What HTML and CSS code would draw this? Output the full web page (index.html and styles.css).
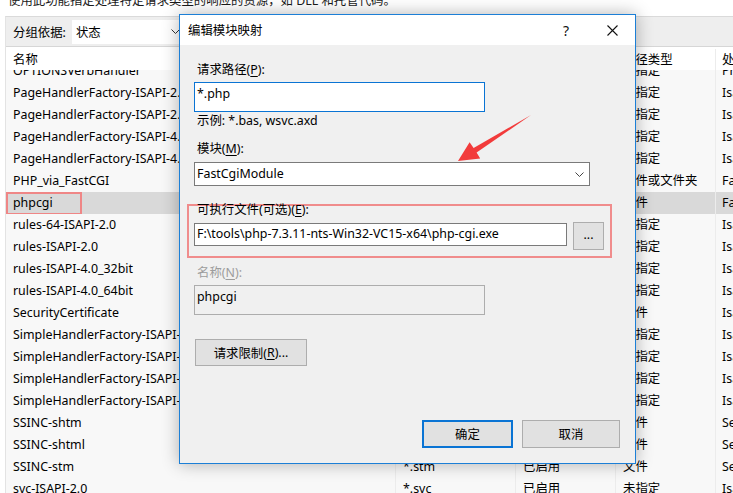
FILE: index.html
```html
<!DOCTYPE html>
<html lang="zh-CN">
<head>
<meta charset="utf-8">
<title>编辑模块映射</title>
<link rel="stylesheet" href="styles.css">
</head>
<body>
<div class="intro">使用此功能指定处理特定请求类型的响应的资源，如 DLL 和托管代码。</div>
<div class="panel">
  <div class="groupbar">
    <span class="group-label">分组依据:</span>
    <div class="group-select"><span>状态</span><svg class="chev" width="9" height="5" viewBox="0 0 9 5"><polyline points="0.5,0.5 4.5,4.5 8.5,0.5" fill="none" stroke="#333" stroke-width="1"/></svg></div>
  </div>
  <div class="list">
    <div class="row head"><div class="c name">名称</div><div class="c path">路径</div><div class="c state">状态</div><div class="c ptype">路径类型</div><div class="c handler">处理程序</div></div>
    <div class="rows">
      <div class="rows-inner">
        <div class="row"><div class="c name">OPTIONSVerbHandler</div><div class="c path">*</div><div class="c state">已启用</div><div class="c ptype">未指定</div><div class="c handler">ProtocolSupportModule</div></div>
        <div class="row"><div class="c name">PageHandlerFactory-ISAPI-2.0</div><div class="c path">*.aspx</div><div class="c state">已启用</div><div class="c ptype">未指定</div><div class="c handler">IsapiModule</div></div>
        <div class="row"><div class="c name">PageHandlerFactory-ISAPI-2.0-64</div><div class="c path">*.aspx</div><div class="c state">已启用</div><div class="c ptype">未指定</div><div class="c handler">IsapiModule</div></div>
        <div class="row"><div class="c name">PageHandlerFactory-ISAPI-4.0_32bit</div><div class="c path">*.aspx</div><div class="c state">已启用</div><div class="c ptype">未指定</div><div class="c handler">IsapiModule</div></div>
        <div class="row"><div class="c name">PageHandlerFactory-ISAPI-4.0_64bit</div><div class="c path">*.aspx</div><div class="c state">已启用</div><div class="c ptype">未指定</div><div class="c handler">IsapiModule</div></div>
        <div class="row"><div class="c name">PHP_via_FastCGI</div><div class="c path">*.php</div><div class="c state">已启用</div><div class="c ptype">文件或文件夹</div><div class="c handler">FastCgiModule</div></div>
        <div class="row selected"><div class="c name">phpcgi<span class="mark"></span></div><div class="c path">*.php</div><div class="c state">已启用</div><div class="c ptype">文件</div><div class="c handler">FastCgiModule</div></div>
        <div class="row"><div class="c name">rules-64-ISAPI-2.0</div><div class="c path">*.rules</div><div class="c state">已启用</div><div class="c ptype">未指定</div><div class="c handler">IsapiModule</div></div>
        <div class="row"><div class="c name">rules-ISAPI-2.0</div><div class="c path">*.rules</div><div class="c state">已启用</div><div class="c ptype">未指定</div><div class="c handler">IsapiModule</div></div>
        <div class="row"><div class="c name">rules-ISAPI-4.0_32bit</div><div class="c path">*.rules</div><div class="c state">已启用</div><div class="c ptype">未指定</div><div class="c handler">IsapiModule</div></div>
        <div class="row"><div class="c name">rules-ISAPI-4.0_64bit</div><div class="c path">*.rules</div><div class="c state">已启用</div><div class="c ptype">未指定</div><div class="c handler">IsapiModule</div></div>
        <div class="row"><div class="c name">SecurityCertificate</div><div class="c path">*.cer</div><div class="c state">已启用</div><div class="c ptype">文件</div><div class="c handler">IsapiModule</div></div>
        <div class="row"><div class="c name">SimpleHandlerFactory-ISAPI-2.0</div><div class="c path">*.ashx</div><div class="c state">已启用</div><div class="c ptype">未指定</div><div class="c handler">IsapiModule</div></div>
        <div class="row"><div class="c name">SimpleHandlerFactory-ISAPI-2.0-64</div><div class="c path">*.ashx</div><div class="c state">已启用</div><div class="c ptype">未指定</div><div class="c handler">IsapiModule</div></div>
        <div class="row"><div class="c name">SimpleHandlerFactory-ISAPI-4.0_32bit</div><div class="c path">*.ashx</div><div class="c state">已启用</div><div class="c ptype">未指定</div><div class="c handler">IsapiModule</div></div>
        <div class="row"><div class="c name">SimpleHandlerFactory-ISAPI-4.0_64bit</div><div class="c path">*.ashx</div><div class="c state">已启用</div><div class="c ptype">未指定</div><div class="c handler">IsapiModule</div></div>
        <div class="row"><div class="c name">SSINC-shtm</div><div class="c path">*.shtm</div><div class="c state">已启用</div><div class="c ptype">文件</div><div class="c handler">ServerSideIncludeModule</div></div>
        <div class="row"><div class="c name">SSINC-shtml</div><div class="c path">*.shtml</div><div class="c state">已启用</div><div class="c ptype">文件</div><div class="c handler">ServerSideIncludeModule</div></div>
        <div class="row"><div class="c name">SSINC-stm</div><div class="c path">*.stm</div><div class="c state">已启用</div><div class="c ptype">文件</div><div class="c handler">ServerSideIncludeModule</div></div>
        <div class="row"><div class="c name">svc-ISAPI-2.0</div><div class="c path">*.svc</div><div class="c state">已启用</div><div class="c ptype">未指定</div><div class="c handler">IsapiModule</div></div>
      </div>
    </div>
  </div>
</div>

<div class="dialog">
  <div class="titlebar">
    <span class="title">编辑模块映射</span>
    <span class="tb-btn help">?</span>
    <span class="tb-btn close"><svg width="11" height="11" viewBox="0 0 11 11"><path d="M0.5 0.5 L10.5 10.5 M10.5 0.5 L0.5 10.5" stroke="#111" stroke-width="1.1" fill="none"/></svg></span>
  </div>
  <div class="dbody">
    <div class="label l1">请求路径(<u>P</u>):</div>
    <div class="field focus">*.php</div>
    <div class="hint">示例: *.bas, wsvc.axd</div>
    <div class="label l2">模块(<u>M</u>):</div>
    <div class="select"><span>FastCgiModule</span><svg width="9" height="5" viewBox="0 0 9 5"><polyline points="0.5,0.5 4.5,4.5 8.5,0.5" fill="none" stroke="#444" stroke-width="1"/></svg></div>
    <div class="redbox">
      <div class="label l3">可执行文件(可选)(<u>E</u>):</div>
      <div class="exe-row">
        <div class="field exe">F:\tools\php-7.3.11-nts-Win32-VC15-x64\php-cgi.exe</div>
        <div class="btn browse">...</div>
      </div>
    </div>
    <div class="label l4 disabled">名称(<u>N</u>):</div>
    <div class="field name-field">phpcgi</div>
    <div class="btn restrict">请求限制(<u>R</u>)...</div>
    <div class="actions">
      <div class="btn ok">确定</div>
      <div class="btn cancel">取消</div>
    </div>
  </div>
</div>

<svg class="arrow" width="90" height="60" viewBox="0 0 90 60">
  <polygon points="8,51 19.6,32.2 23.6,37.9 81,5 26.6,42.6 30.2,48.4" fill="#f23b3b"/>
</svg>
</body>
</html>
```

FILE: styles.css
```css
* { box-sizing: border-box; }

body {
  margin: 0;
  width: 733px;
  height: 493px;
  overflow: hidden;
  position: relative;
  background: #fff;
  color: #000;
  font-family: "Noto Sans", "Noto Sans CJK SC", sans-serif;
  font-size: 12.4px;
}

.intro {
  margin-top: -6px;
  height: 14px;
  line-height: 14px;
  padding-left: 8px;
  white-space: nowrap;
  color: #1a1a1a;
}

.panel {
  margin: 8px 0 0 5px;
  height: 477px;
  border-top: 1px solid #dadada;
  border-left: 1px solid #e3e3e3;
  display: flex;
  flex-direction: column;
}

.groupbar {
  height: 30px;
  flex: none;
  display: flex;
  align-items: center;
  background: #eeeeee;
  border-bottom: 1px solid #d6d6d6;
}

.group-label { padding-left: 7px; }

.group-select {
  margin-left: 6px;
  width: 116px;
  height: 24px;
  background: #fff;
  display: flex;
  align-items: center;
  justify-content: space-between;
  padding: 0 8px 0 4px;
}

.list {
  flex: 1;
  display: flex;
  flex-direction: column;
  min-height: 0;
  background: #f8f8f8;
}

.row {
  display: flex;
  height: 22px;
  line-height: 22px;
  white-space: nowrap;
  position: relative;
}

.row.head {
  height: 23px;
  padding-top: 2px;
  line-height: 21px;
  background: #fff;
  flex: none;
}

.c {
  padding-left: 7px;
  overflow: hidden;
  border-right: 1px solid #ececec;
  position: relative;
}

.name { width: 390px; flex: none; }
.path { width: 120px; flex: none; }
.state { width: 100px; flex: none; }
.ptype { width: 100px; flex: none; }
.handler { flex: 1; border-right: none; padding-left: 6px; }

.rows {
  flex: 1;
  overflow: hidden;
}

.rows-inner { margin-top: -10px; }

.row.selected { background: #d9d9d9; }

.mark {
  position: absolute;
  left: 0;
  top: 0;
  width: 76px;
  height: 23px;
  border: 2px solid #ef8686;
}

/* dialog */
.dialog {
  position: absolute;
  left: 179px;
  top: 14px;
  width: 457px;
  height: 450px;
  border: 1px solid #1c7fd6;
  background: #f0f0f0;
  box-shadow: 0 0 16px rgba(0, 0, 0, 0.3);
}

.titlebar {
  height: 30px;
  background: #fff;
  display: flex;
  align-items: center;
  padding-left: 8px;
}

.title { flex: 1; }

.tb-btn {
  width: 46px;
  height: 30px;
  display: flex;
  align-items: center;
  justify-content: center;
  font-size: 14px;
  color: #111;
}

.dbody { padding-left: 14px; }

.label {
  padding-left: 3px;
  line-height: 16px;
}

.label u, .btn u { text-underline-offset: 2px; }

.l1 { margin-top: 17px; }
.l2 { margin-top: 12px; }
.l4 { margin-top: 7px; }
.disabled { color: #9d9d9d; }

.field {
  background: #fff;
  border: 1px solid #7a7a7a;
  padding-left: 2px;
  white-space: nowrap;
  overflow: hidden;
}

.focus {
  margin-top: 4px;
  width: 291px;
  height: 30px;
  border-color: #0a74d4;
  padding-top: 3px;
  line-height: 16px;
}

.hint {
  display: inline-block;
  position: relative;
  margin-top: -2px;
  padding: 0 6px 0 3px;
  line-height: 17px;
  background: #f0f0f0;
}

.select {
  margin-top: 5px;
  width: 396px;
  height: 24px;
  background: #fff;
  border: 1px solid #7a7a7a;
  display: flex;
  align-items: center;
  justify-content: space-between;
  padding: 0 5px 2px 2px;
}

.select svg { margin-top: 2px; }

.redbox {
  margin-top: 18px;
  margin-left: -7px;
  width: 425px;
  height: 54px;
  border: 2px solid #f08c8c;
  padding-left: 5px;
}

.l3 { line-height: 12px; margin-top: -2px; }

.exe-row {
  margin-top: 7px;
  display: flex;
  align-items: flex-start;
}

.exe {
  width: 373px;
  height: 23px;
  line-height: 19px;
}

.btn {
  background: #e1e1e1;
  border: 1px solid #adadad;
  display: flex;
  align-items: center;
  justify-content: center;
}

.browse {
  margin-left: 6px;
  margin-top: -1px;
  width: 31px;
  height: 28px;
  padding-bottom: 3px;
}

.name-field {
  margin-top: 4px;
  width: 291px;
  height: 30px;
  background: #f0f0f0;
  border-color: #adadad;
  padding-top: 3px;
  line-height: 16px;
}

.restrict {
  margin-top: 24px;
  margin-left: 1px;
  width: 112px;
  height: 27px;
}

.actions {
  margin-top: 54px;
  display: flex;
  justify-content: flex-end;
  gap: 9px;
  padding-right: 15px;
}

.ok {
  width: 91px;
  height: 28px;
  border: 2px solid #0a74d4;
}

.cancel {
  width: 98px;
  height: 28px;
}

.arrow {
  position: absolute;
  left: 450px;
  top: 110px;
}
```
